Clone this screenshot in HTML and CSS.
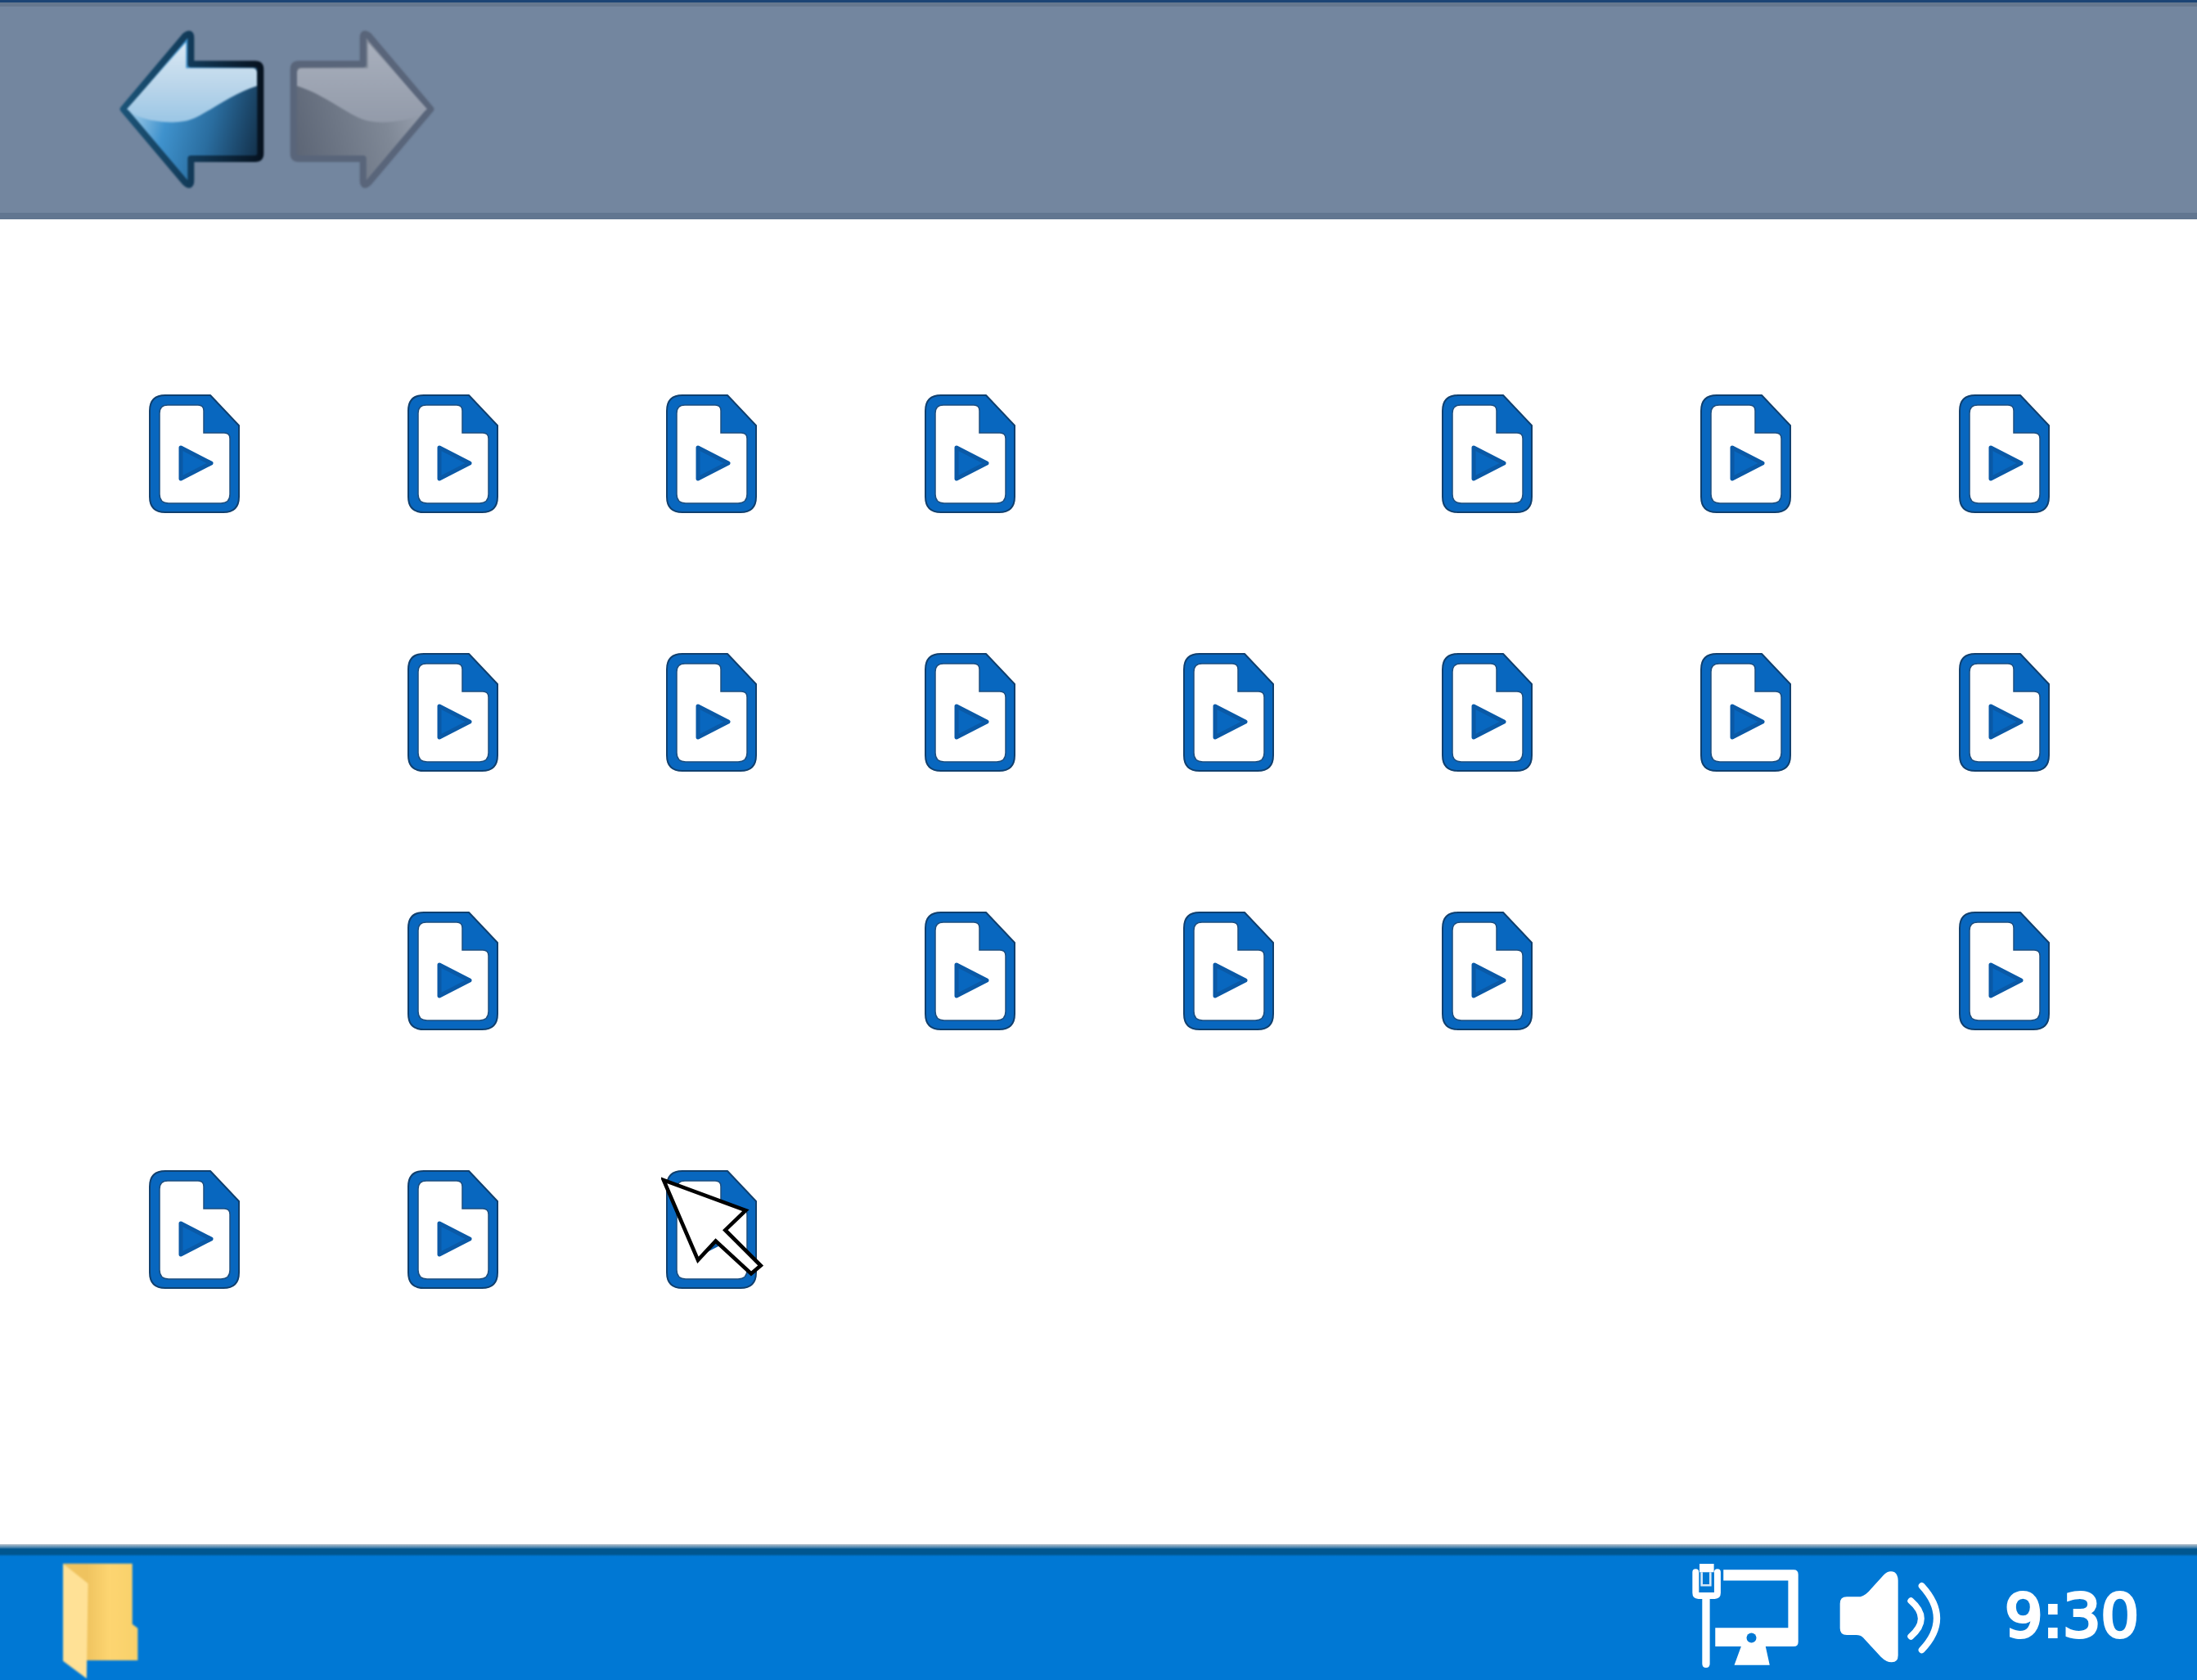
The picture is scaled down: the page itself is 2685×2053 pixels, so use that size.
FILE: index.html
```html
<!DOCTYPE html>
<html lang="en">
<head>
    <meta charset="UTF-8">
    <meta name="viewport" content="width=device-width, initial-scale=1.0">
    <title>Files</title>
    <link rel="stylesheet" href="styles.css">
</head>
<body>
    <svg class="defs" aria-hidden="true">
        <defs>
            <linearGradient id="back-edge" gradientUnits="userSpaceOnUse" x1="140" y1="0" x2="660" y2="0">
                <stop offset="0" stop-color="#1c5478"/>
                <stop offset="0.5" stop-color="#123a58"/>
                <stop offset="1" stop-color="#06121f"/>
            </linearGradient>
            <linearGradient id="back-body" gradientUnits="userSpaceOnUse" x1="180" y1="400" x2="650" y2="520">
                <stop offset="0" stop-color="#9fcbe8"/>
                <stop offset="0.28" stop-color="#3f92cd"/>
                <stop offset="0.62" stop-color="#2a6d9f"/>
                <stop offset="1" stop-color="#14334e"/>
            </linearGradient>
            <linearGradient id="back-shine" gradientUnits="userSpaceOnUse" x1="0" y1="150" x2="0" y2="460">
                <stop offset="0" stop-color="#dbe9f4"/>
                <stop offset="0.55" stop-color="#b9d5ea"/>
                <stop offset="1" stop-color="#98c5e5"/>
            </linearGradient>
            <linearGradient id="forward-body" gradientUnits="userSpaceOnUse" x1="180" y1="400" x2="650" y2="520">
                <stop offset="0" stop-color="#98a0ae"/>
                <stop offset="0.3" stop-color="#7f8896"/>
                <stop offset="1" stop-color="#5d6676"/>
            </linearGradient>
            <linearGradient id="forward-shine" gradientUnits="userSpaceOnUse" x1="0" y1="150" x2="0" y2="460">
                <stop offset="0" stop-color="#a9b0bd"/>
                <stop offset="1" stop-color="#929aa9"/>
            </linearGradient>
            <linearGradient id="folder-back" gradientUnits="userSpaceOnUse" x1="315" y1="0" x2="500" y2="0">
                <stop offset="0" stop-color="#efc35f"/>
                <stop offset="0.45" stop-color="#fdd571"/>
                <stop offset="1" stop-color="#f8d16b"/>
            </linearGradient>
            <symbol id="file-play" viewBox="0 0 111 145">
                <path class="file-shell" d="M20 1 H75 L110 38 V125 Q110 144 91 144 H20 Q1 144 1 125 V20 Q1 1 20 1 Z"/>
                <path class="file-page" d="M23 13 H60 Q67 13 67 20 V47 H92 Q99 47 99 54 V122 Q99 133 88 133 H24 Q13 133 13 122 V23 Q13 13 23 13 Z"/>
                <path class="file-play" d="M39 65 L76 84 L39 103 Z"/>
            </symbol>
        </defs>
    </svg>

    <header class="toolbar">
        <svg class="arrow" viewBox="129 105 546 594">
            <path d="M152 400 L380 130 Q400 115 400 140 V235 H635 Q655 235 655 255 V562 Q655 582 635 582 H400 V660 Q400 690 378 668 Z" fill="url(#back-body)" stroke="url(#back-edge)" stroke-width="24" stroke-linejoin="round"/>
            <path d="M165 400 L382 155 V250 H625 Q640 250 642 265 V315 C560 340 480 400 420 430 C370 455 310 450 250 440 Q200 430 165 400 Z" fill="url(#back-shine)"/>
        </svg>
        <svg class="arrow arrow-forward" viewBox="129 105 546 594">
            <path d="M152 400 L380 130 Q400 115 400 140 V235 H635 Q655 235 655 255 V562 Q655 582 635 582 H400 V660 Q400 690 378 668 Z" fill="url(#forward-body)" stroke="#59657a" stroke-width="24" stroke-linejoin="round"/>
            <path d="M165 400 L382 155 V250 H625 Q640 250 642 265 V315 C560 340 480 400 420 430 C370 455 310 450 250 440 Q200 430 165 400 Z" fill="url(#forward-shine)"/>
        </svg>
    </header>

    <main class="files">
        <!-- row 1 -->
        <div class="cell"><svg class="file"><use href="#file-play"/></svg></div>
        <div class="cell"><svg class="file"><use href="#file-play"/></svg></div>
        <div class="cell"><svg class="file"><use href="#file-play"/></svg></div>
        <div class="cell"><svg class="file"><use href="#file-play"/></svg></div>
        <div class="cell"></div>
        <div class="cell"><svg class="file"><use href="#file-play"/></svg></div>
        <div class="cell"><svg class="file"><use href="#file-play"/></svg></div>
        <div class="cell"><svg class="file"><use href="#file-play"/></svg></div>
        <!-- row 2 -->
        <div class="cell"></div>
        <div class="cell"><svg class="file"><use href="#file-play"/></svg></div>
        <div class="cell"><svg class="file"><use href="#file-play"/></svg></div>
        <div class="cell"><svg class="file"><use href="#file-play"/></svg></div>
        <div class="cell"><svg class="file"><use href="#file-play"/></svg></div>
        <div class="cell"><svg class="file"><use href="#file-play"/></svg></div>
        <div class="cell"><svg class="file"><use href="#file-play"/></svg></div>
        <div class="cell"><svg class="file"><use href="#file-play"/></svg></div>
        <!-- row 3 -->
        <div class="cell"></div>
        <div class="cell"><svg class="file"><use href="#file-play"/></svg></div>
        <div class="cell"></div>
        <div class="cell"><svg class="file"><use href="#file-play"/></svg></div>
        <div class="cell"><svg class="file"><use href="#file-play"/></svg></div>
        <div class="cell"><svg class="file"><use href="#file-play"/></svg></div>
        <div class="cell"></div>
        <div class="cell"><svg class="file"><use href="#file-play"/></svg></div>
        <!-- row 4 -->
        <div class="cell"><svg class="file"><use href="#file-play"/></svg></div>
        <div class="cell"><svg class="file"><use href="#file-play"/></svg></div>
        <div class="cell">
            <svg class="file"><use href="#file-play"/></svg>
            <svg class="pointer" viewBox="55 55 375 365">
                <path d="M64 67 L365 178 L290 250 L420 380 L385 410 L255 290 L190 360 Z"/>
            </svg>
        </div>
    </main>

    <footer class="taskbar">
        <svg class="folder" viewBox="225 120 280 430">
            <path d="M228 122 H483 V345 L503 360 V478 H315 V200 Z" fill="url(#folder-back)"/>
            <path d="M228 122 L320 195 L315 545 L228 480 Z" fill="#ffe196"/>
        </svg>
        <div class="tray">
            <svg class="network" viewBox="25 25 400 395">
                <path class="tray-fill" d="M140 55 H398 Q415 55 415 72 V320 Q415 337 398 337 H295 L310 405 H180 L205 337 H110 V268 H378 V95 H140 Z"/>
                <circle cx="243" cy="305" r="18" fill="#0078d4"/>
                <path class="tray-fill" d="M62 150 H90 V400 Q90 415 76 415 Q62 415 62 400 Z"/>
                <path class="tray-line" d="M38 64 V140 Q38 150 48 150 H108 Q118 150 118 140 V64"/>
                <path class="tray-fill" d="M52 33 H105 V64 H52 Z"/>
                <path class="tray-soft" d="M60 64 V112 H92 V64"/>
            </svg>
            <svg class="speaker" viewBox="560 55 375 345">
                <path class="tray-fill" d="M590 155 H640 Q660 150 680 125 L725 75 Q745 55 765 65 Q778 75 778 95 V370 Q778 395 755 395 Q735 395 715 375 L650 305 Q640 295 625 295 H590 Q565 295 565 270 V180 Q565 155 590 155 Z"/>
                <path class="tray-line" d="M825 170 Q900 235 825 300"/>
                <path class="tray-line" d="M865 115 Q975 235 865 350"/>
            </svg>
            <span class="clock">9:30</span>
        </div>
    </footer>
</body>
</html>
```
FILE: styles.css
```css
* {
    box-sizing: border-box;
}
body {
    display: flex;
    flex-direction: column;
    height: 100vh;
    margin: 0;
    overflow: hidden;
    background-color: #fff;
    font-family: "DejaVu Sans", Verdana, sans-serif;
}
.defs {
    display: block;
    flex: none;
    width: 0;
    height: 0;
}

/* top bar */
.toolbar {
    display: flex;
    flex: none;
    align-items: flex-start;
    gap: 27px;
    height: 268px;
    padding: 32px 0 0 143px;
    border-top: 3px solid #1b4475;
    border-bottom: 8px solid #627690;
    background: linear-gradient(#66788f 0, #66788f 5px, #73869f 5px);
}
.arrow {
    width: 182px;
    height: 198px;
    filter: blur(0.8px);
}
.arrow-forward {
    transform: scaleX(-1);
}

/* file grid */
.files {
    display: grid;
    flex: 1;
    grid-template-columns: repeat(8, 111px);
    grid-auto-rows: 145px;
    gap: 171px 205px;
    align-content: start;
    padding: 214px 0 0 182px;
}
.cell {
    position: relative;
}
.file {
    display: block;
    width: 111px;
    height: 145px;
    filter: blur(0.7px);
}
.file-shell {
    fill: #0867bf;
    stroke: #10406f;
    stroke-width: 2;
    stroke-linejoin: round;
}
.file-page {
    fill: #fff;
    stroke: #1d4f80;
    stroke-width: 1.5;
}
.file-play {
    fill: #0867bf;
    stroke: #0a59a6;
    stroke-width: 5;
    stroke-linejoin: round;
}
.pointer {
    position: absolute;
    left: -6px;
    top: 8px;
    width: 125px;
    height: 122px;
    filter: blur(0.6px);
}
.pointer path {
    fill: #fff;
    stroke: #000;
    stroke-width: 14;
    stroke-linejoin: miter;
}

/* taskbar */
.taskbar {
    display: flex;
    flex: none;
    align-items: flex-start;
    justify-content: space-between;
    height: 166px;
    padding: 15px 0 0 76px;
    background: linear-gradient(#b9c4cd 0, #4c86b0 4px, #00568f 6px, #00568f 12px, #0078d4 15px);
}
.folder {
    width: 93px;
    height: 143px;
    margin-top: 8px;
    filter: blur(1px);
}
.tray {
    display: flex;
    align-items: flex-start;
    width: 617px;
}
.network {
    width: 133px;
    height: 132px;
    margin-top: 6px;
    filter: blur(0.7px);
}
.speaker {
    width: 125px;
    height: 115px;
    margin: 16px 0 0 46px;
    filter: blur(0.7px);
}
.tray-fill {
    fill: #fff;
}
.tray-line {
    fill: none;
    stroke: #fff;
    stroke-width: 24;
    stroke-linecap: round;
}
.tray-soft {
    fill: none;
    stroke: #d7e8f7;
    stroke-width: 8;
}
.clock {
    margin: 29px 0 0 78px;
    color: #fff;
    font-size: 73px;
    line-height: 88px;
    -webkit-text-stroke: 4px #fff;
}
```
